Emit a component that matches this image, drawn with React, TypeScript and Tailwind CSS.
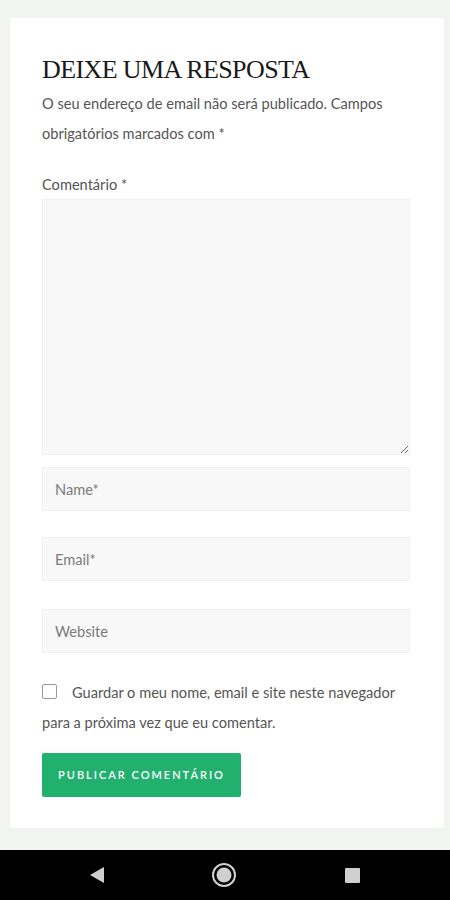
import React from 'react';

const Field: React.FC<{ placeholder: string; className?: string }> = ({ placeholder, className }) => (
  <input
    placeholder={placeholder}
    className={
      'block w-full h-[44px] px-[12px] bg-[#f8f8f8] border border-[#f1f1f1] text-[14.6px] text-[#555] placeholder:text-[#7a7a7a] outline-none ' +
      (className ?? '')
    }
  />
);

export default function App() {
  return (
    <div className="w-[450px] h-[900px] bg-[#f2f4f2] flex flex-col font-['Lato','Liberation_Sans',sans-serif]">
      {/* Comment form card */}
      <div className="mt-[18px] ml-[10px] w-[434px] bg-white pl-[32px] pr-[34px] pt-[36px] pb-[31px]">
        <h3 className="font-['Liberation_Serif',serif] text-[26px] leading-[32px] text-[#1a1a1a] tracking-[-0.6px]">
          DEIXE UMA RESPOSTA
        </h3>
        <p className="mt-[3px] text-[14.6px] leading-[30px] text-[#555]">
          O seu endereço de email não será publicado. Campos obrigatórios marcados com *
        </p>

        <label className="block mt-[24px] text-[14.6px] leading-[24px] text-[#555]">Comentário *</label>
        <textarea className="block mt-[2px] w-full h-[256px] bg-[#f8f8f8] border border-[#f1f1f1] outline-none resize-y" />

        <Field placeholder="Name*" className="mt-[12px]" />
        <Field placeholder="Email*" className="mt-[26px]" />
        <Field placeholder="Website" className="mt-[28px]" />

        <p className="mt-[25px] text-[14.6px] leading-[30px] text-[#555]">
          <span className="inline-block w-[15px] h-[15px] border border-[#999] rounded-[2px] align-[-1px] mr-[15px]" />
          Guardar o meu nome, email e site neste navegador para a próxima vez que eu comentar.
        </p>

        <button className="mt-[15px] h-[44px] w-[199px] bg-[#22b06f] text-white text-[11px] font-semibold tracking-[2px] rounded-[2px]">
          PUBLICAR COMENTÁRIO
        </button>
      </div>

      <div className="flex-1" />

      {/* Android navigation bar */}
      <div className="h-[50px] bg-black flex items-center">
        <div className="w-[194px] flex justify-center">
          <svg width="16" height="18" viewBox="0 0 16 18">
            <path d="M15 1 L1 9 L15 17 Z" fill="#cfcfcf" />
          </svg>
        </div>
        <div className="w-[62px] flex justify-center">
          <svg width="26" height="26" viewBox="0 0 26 26">
            <circle cx="13" cy="13" r="11" fill="none" stroke="#cfcfcf" strokeWidth="2" />
            <circle cx="13" cy="13" r="7.5" fill="#cfcfcf" />
          </svg>
        </div>
        <div className="w-[196px] flex justify-center">
          <div className="w-[15px] h-[15px] bg-[#cfcfcf] rounded-[1px]" />
        </div>
      </div>
    </div>
  );
}
